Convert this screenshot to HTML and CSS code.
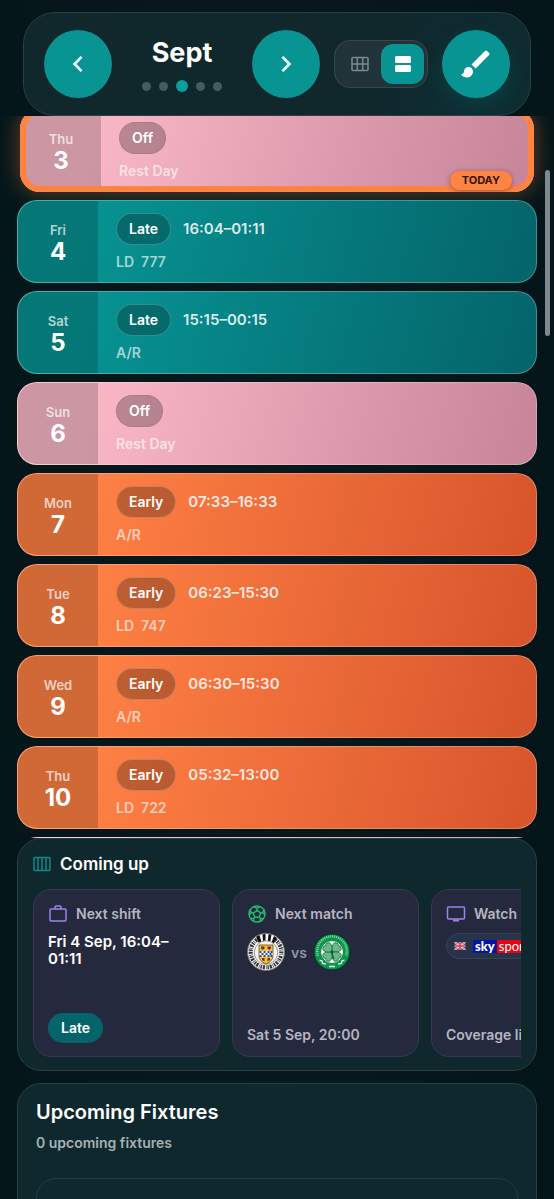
FILE: index.html
```html
<!DOCTYPE html>
<html lang="en">
<head>
    <meta charset="UTF-8">
    <meta name="viewport" content="width=device-width, initial-scale=1.0">
    <title>Shift Calendar</title>
    <link rel="stylesheet" href="styles.css">
</head>
<body>
    <header class="toolbar">
        <button class="round-btn" aria-label="Previous month">
            <svg width="32" height="32" viewBox="0 0 24 24" fill="currentColor"><path d="M15.4 7.4 14 6l-6 6 6 6 1.4-1.4L10.8 12z"/></svg>
        </button>
        <div class="month">
            <h1>Sept</h1>
            <div class="dots">
                <span class="dot"></span>
                <span class="dot"></span>
                <span class="dot active"></span>
                <span class="dot"></span>
                <span class="dot"></span>
            </div>
        </div>
        <button class="round-btn" aria-label="Next month">
            <svg width="32" height="32" viewBox="0 0 24 24" fill="currentColor"><path d="M8.6 16.6 10 18l6-6-6-6-1.4 1.4 4.6 4.6z"/></svg>
        </button>
        <div class="view-toggle">
            <button aria-label="Grid view">
                <svg width="18" height="16" viewBox="0 0 18 16" fill="none" stroke="currentColor" stroke-width="1.6"><rect x="1" y="1.5" width="16" height="13" rx="1"/><path d="M6.3 1.5v13M11.7 1.5v13M1 8h16"/></svg>
            </button>
            <button class="active" aria-label="List view">
                <svg width="18" height="18" viewBox="0 0 18 18" fill="currentColor"><rect x="1" y="1" width="16" height="7" rx="1.5"/><rect x="1" y="10" width="16" height="7" rx="1.5"/></svg>
            </button>
        </div>
        <button class="round-btn paint" aria-label="Theme">
            <svg width="36" height="36" viewBox="0 0 24 24" fill="currentColor"><path d="M7 14c-1.66 0-3 1.34-3 3 0 1.31-1.16 2-2 2 .92 1.22 2.49 2 4 2 2.21 0 4-1.79 4-4 0-1.66-1.34-3-3-3zm13.71-9.37-1.34-1.34a1 1 0 0 0-1.41 0L9 12.25 11.75 15l8.96-8.96a1 1 0 0 0 0-1.41z"/></svg>
        </button>
    </header>

    <main>
        <div class="list-wrap">
            <div class="days">
                <article class="day off today">
                    <div class="date"><span>Thu</span><strong>3</strong></div>
                    <div class="info">
                        <div class="line"><span class="pill">Off</span></div>
                        <p>Rest Day</p>
                    </div>
                    <span class="today-tag">TODAY</span>
                </article>
                <article class="day late">
                    <div class="date"><span>Fri</span><strong>4</strong></div>
                    <div class="info">
                        <div class="line"><span class="pill">Late</span><time>16:04–01:11</time></div>
                        <p>LD&nbsp; 777</p>
                    </div>
                </article>
                <article class="day late">
                    <div class="date"><span>Sat</span><strong>5</strong></div>
                    <div class="info">
                        <div class="line"><span class="pill">Late</span><time>15:15–00:15</time></div>
                        <p>A/R</p>
                    </div>
                </article>
                <article class="day off">
                    <div class="date"><span>Sun</span><strong>6</strong></div>
                    <div class="info">
                        <div class="line"><span class="pill">Off</span></div>
                        <p>Rest Day</p>
                    </div>
                </article>
                <article class="day early">
                    <div class="date"><span>Mon</span><strong>7</strong></div>
                    <div class="info">
                        <div class="line"><span class="pill">Early</span><time>07:33–16:33</time></div>
                        <p>A/R</p>
                    </div>
                </article>
                <article class="day early">
                    <div class="date"><span>Tue</span><strong>8</strong></div>
                    <div class="info">
                        <div class="line"><span class="pill">Early</span><time>06:23–15:30</time></div>
                        <p>LD&nbsp; 747</p>
                    </div>
                </article>
                <article class="day early">
                    <div class="date"><span>Wed</span><strong>9</strong></div>
                    <div class="info">
                        <div class="line"><span class="pill">Early</span><time>06:30–15:30</time></div>
                        <p>A/R</p>
                    </div>
                </article>
                <article class="day early">
                    <div class="date"><span>Thu</span><strong>10</strong></div>
                    <div class="info">
                        <div class="line"><span class="pill">Early</span><time>05:32–13:00</time></div>
                        <p>LD&nbsp; 722</p>
                    </div>
                </article>
                <article class="day off"></article>
            </div>
            <div class="scroll-thumb"></div>
        </div>

        <section class="panel coming-up">
            <h2>
                <svg width="18" height="16" viewBox="0 0 18 16" fill="none" stroke="#0b8f8c" stroke-width="1.4"><rect x="1" y="1.5" width="16" height="13" rx="1"/><path d="M5 1.5v13M9 1.5v13M13 1.5v13"/></svg>
                Coming up
            </h2>
            <div class="cards">
                <article class="card">
                    <h3>
                        <svg width="20" height="20" viewBox="0 0 20 20" fill="none" stroke="#9b82ec" stroke-width="1.5"><rect x="2" y="5" width="16" height="12" rx="1"/><path d="M7 5V3q0-1 1-1h4q1 0 1 1v2"/></svg>
                        Next shift
                    </h3>
                    <p class="shift-time">Fri 4 Sep, 16:04–01:11</p>
                    <span class="badge">Late</span>
                </article>
                <article class="card">
                    <h3>
                        <svg width="20" height="20" viewBox="0 0 20 20" fill="none" stroke="#22bd6b" stroke-width="1.4"><circle cx="10" cy="10" r="8"/><path d="m10 6.4 3.6 2.6-1.4 4.2H7.8L6.4 9z"/><path d="M10 6.4V4.5L7 2.6M10 4.5l3-1.9M13.6 9l1.9-.6 2.1-3M15.5 8.4 18 11M12.200 13.200l1.200 1.600-.4 2.600M13.400 14.800l3.200-.4M7.800 13.200l-1.200 1.600.4 2.600M6.600 14.800l-3.200-.4M6.400 9l-1.900-.6-2.100-3M4.500 8.400 2 11"/></svg>
                        Next match
                    </h3>
                    <div class="teams">
                        <svg width="38" height="38" viewBox="0 0 38 38" role="img" aria-label="St Mirren">
                            <circle cx="19" cy="19" r="18.5" fill="#eee" stroke="#777"/>
                            <circle cx="19" cy="19" r="15.3" fill="none" stroke="#333" stroke-width="4" stroke-dasharray="1.3 .9 .6 1.2 2 1"/>
                            <path d="M9 3.500Q19-1.500 29 3.500L26.500 9.500Q19 6 11.500 9.500z" fill="#fff"/>
                            <path d="m9 3.800 3.500-1.800 1.800 6.500-2.700 1.200zM15.500 1.300l3-.3v6.600l-2.500.3zM21.500 1l3 .8-1.200 6.600-2.400-.6zM27 3l2.700 1.700-3 5.800-2.100-1.400z" fill="#111"/>
                            <circle cx="19" cy="19.500" r="11.700" fill="#f5f5f5" stroke="#777" stroke-width=".7"/>
                            <path d="M12 12h14v11q0 5-7 8-7-3-7-8z" fill="#f3c430" stroke="#604b25" stroke-width=".8"/>
                            <path d="M12.500 18h13v5.500h-13z" fill="#fff"/>
                            <path d="M12.500 18h2v2h-2zm4 0h2v2h-2zm4 0h2v2h-2zm3 0h2v2h-2zm-9 2h2v2h-2zm4 0h2v2h-2zm4 0h2v2h-2zm-10 2h2v2h-2zm4 0h2v2h-2zm4 0h2v2h-2zm3 0h2v2h-2z" fill="#254d9f"/>
                            <path d="M14 13.500h3.500v2L15.800 17 14 15.500zm6.500 0H24v2L22.200 17l-1.700-1.500zM15 25h2.500v3.500L15 27zm5.500 0H23v2l-2.500 1.500z" fill="#8d2530"/>
                        </svg>
                        <span>vs</span>
                        <svg width="38" height="38" viewBox="0 0 38 38" role="img" aria-label="Celtic">
                            <circle cx="19" cy="19" r="18" fill="#08964a" stroke="#0b2f22"/>
                            <path d="M5 23A14.800 14.800 0 1 1 33 23" fill="none" stroke="#8ed3aa" stroke-width="2.200" stroke-dasharray="1.100 .9"/>
                            <path d="m6.500 27 2.500 1 .8 2.500 3 .5M31.500 27l-2.500 1-.8 2.500-3 .5M16 33.500h6" fill="none" stroke="#fff" stroke-width="1.300"/>
                            <circle cx="19" cy="19" r="11.500" fill="#f4fbf6" stroke="#07803e"/>
                            <g fill="#69b98b" stroke="#176b3e" stroke-width=".8" transform="rotate(45 19 19)">
                                <path id="leaf" d="M19 18.500q-5.500-3.500-4.700-7.500Q16.500 7.500 19 10q2.500-2.500 4.700 1 .8 4-4.700 7.500z"/>
                                <use href="#leaf" transform="rotate(90 19 19)"/>
                                <use href="#leaf" transform="rotate(180 19 19)"/>
                                <use href="#leaf" transform="rotate(270 19 19)"/>
                            </g>
                            <path d="M19 19q.5 4 2 7" fill="none" stroke="#176b3e" stroke-width="1.500"/>
                            <circle cx="19" cy="19" r="1.400" fill="#164d32"/>
                        </svg>
                    </div>
                    <p class="foot">Sat 5 Sep, 20:00</p>
                </article>
                <article class="card">
                    <h3>
                        <svg width="20" height="20" viewBox="0 0 20 20" fill="none" stroke="#9b82ec" stroke-width="1.5"><rect x="1.5" y="3" width="17" height="12" rx="1"/><path d="M7 16.5h6" stroke-width="2"/></svg>
                        Watch live
                    </h3>
                    <div class="channel">
                        <svg width="12" height="8" viewBox="0 0 12 9"><path fill="#2c3b77" d="M0 0h12v9H0z"/><path d="m0 0 12 9M12 0 0 9" stroke="#eee" stroke-width="2"/><path d="m0 0 12 9M12 0 0 9" stroke="#d4384b" stroke-width=".8"/><path d="M6 0v9M0 4.500h12" stroke="#eee" stroke-width="3"/><path d="M6 0v9M0 4.500h12" stroke="#d4384b" stroke-width="1.800"/></svg>
                        <span class="sky"><b>sky</b><i>sports</i></span>
                    </div>
                    <p class="foot">Coverage listed</p>
                </article>
            </div>
        </section>

        <section class="panel fixtures">
            <h2>Upcoming Fixtures</h2>
            <p>0 upcoming fixtures</p>
            <div class="fixture-box"></div>
        </section>
    </main>
</body>
</html>
```
FILE: styles.css
```css
* {
    box-sizing: border-box;
}
html {
    scrollbar-width: none;
    background-color: #06161a;
}
body {
    margin: 0;
    padding-top: 12px;
    font-family: Inter, sans-serif;
    font-weight: 600;
    color: #fff;
    background: linear-gradient(90deg, #04161a, #07191e 50%, #041519);
}
h1, h2, h3, p {
    margin: 0;
}
button {
    border: none;
    padding: 0;
    color: #fff;
    cursor: pointer;
    display: flex;
    align-items: center;
    justify-content: center;
}

/* Toolbar */
.toolbar {
    display: flex;
    align-items: center;
    gap: 14px;
    height: 104px;
    margin: 0 23px;
    padding: 0 20px;
    border: 1px solid #2a3f43;
    border-radius: 32px;
    background: radial-gradient(circle at 90% 75%, #0c3034, #10272c 22%);
}
.round-btn {
    flex: none;
    width: 68px;
    height: 68px;
    border-radius: 50%;
    background-color: #089493;
}
.paint {
    box-shadow: 0 8px 20px rgba(8, 148, 147, 0.14);
}
.month {
    flex: 1;
    display: flex;
    flex-direction: column;
    align-items: center;
    gap: 10px;
}
.month h1 {
    font-size: 27px;
    line-height: 34px;
    font-weight: 700;
}
.dots {
    display: flex;
    align-items: center;
    gap: 8px;
}
.dot {
    width: 9px;
    height: 9px;
    border-radius: 50%;
    background-color: #485a5e;
}
.dot.active {
    width: 12px;
    height: 12px;
    background-color: #089e99;
}
.view-toggle {
    flex: none;
    display: flex;
    padding: 3px;
    border: 1px solid #37484c;
    border-radius: 16px;
    background-color: #203338;
}
.view-toggle button {
    width: 43px;
    height: 40px;
    border-radius: 12px;
    background: none;
    color: #7c898c;
}
.view-toggle .active {
    background-color: #089493;
    color: #fff;
}

/* Day list */
.list-wrap {
    position: relative;
}
.days {
    display: flex;
    flex-direction: column;
    gap: 8px;
    max-height: 722px;
    padding: 0 17px;
    overflow: hidden;
}
.day {
    position: relative;
    flex: none;
    display: flex;
    height: 83px;
    border: 1px solid rgba(255, 255, 255, 0.25);
    border-radius: 20px;
    background-origin: border-box;
}
.day.late {
    background-image: linear-gradient(105deg, #079292 15%, #04646a);
}
.day.off {
    background-image: linear-gradient(105deg, #f9b7c6 15%, #c58498);
}
.day.early {
    background-image: linear-gradient(105deg, #ff8044 15%, #d7542c);
}
.date {
    flex: none;
    display: flex;
    flex-direction: column;
    align-items: center;
    justify-content: center;
    width: 80px;
    padding-top: 4px;
    border-radius: 19px 0 0 19px;
    background-color: rgba(0, 0, 0, 0.18);
}
.date span {
    font-size: 13px;
    line-height: 16px;
    color: rgba(255, 255, 255, 0.7);
}
.date strong {
    font-size: 24px;
    line-height: 28px;
    font-weight: 700;
}
.info {
    flex: 1;
    padding: 12px 18px;
}
.line {
    display: flex;
    align-items: center;
    gap: 12px;
}
.pill {
    padding: 5px 12px;
    border: 1px solid rgba(255, 255, 255, 0.22);
    border-radius: 16px;
    font-size: 14px;
    line-height: 20px;
    background-color: rgba(0, 0, 0, 0.25);
}
.late .pill {
    background-color: #056a6b;
}
.off .pill {
    border-color: rgba(150, 100, 120, 0.3);
}
.line time {
    font-size: 15px;
    line-height: 20px;
    color: rgba(255, 255, 255, 0.85);
}
.info p {
    margin-top: 8px;
    font-size: 14px;
    line-height: 18px;
    color: rgba(255, 255, 255, 0.65);
}
.today {
    margin: -7px 3px 0;
    box-shadow: 0 0 22px rgba(255, 130, 66, 0.4);
}
.today::after {
    content: "";
    position: absolute;
    inset: -1px;
    border: 6px solid #ff8442;
    border-radius: 20px;
}
.today-tag {
    position: absolute;
    right: 21px;
    bottom: 1px;
    z-index: 1;
    padding: 0 12px;
    border-radius: 10px;
    font-size: 11px;
    line-height: 19px;
    font-weight: 700;
    color: #321408;
    background-color: #ff8442;
    box-shadow: 0 1px 5px rgba(90, 30, 30, 0.5);
}
.scroll-thumb {
    position: absolute;
    top: 54px;
    right: 4px;
    width: 5px;
    height: 166px;
    border-radius: 3px;
    background-color: #7e898b;
}

/* Panels */
.panel {
    margin: 0 17px;
    border: 1px solid #29403f;
    border-radius: 24px;
    background-color: #0f282d;
}
.coming-up {
    padding: 13px 15px;
}
.coming-up h2 {
    display: flex;
    align-items: center;
    gap: 9px;
    font-size: 17px;
    line-height: 24px;
    font-weight: 600;
}
.cards {
    display: flex;
    gap: 12px;
    margin-top: 13px;
    overflow: hidden;
}
.card {
    flex: none;
    display: flex;
    flex-direction: column;
    align-items: flex-start;
    width: 187px;
    height: 168px;
    padding: 13px 14px;
    border: 1px solid #36394e;
    border-radius: 18px;
    background-color: #25293e;
}
.card h3 {
    display: flex;
    align-items: center;
    gap: 8px;
    font-size: 14px;
    line-height: 22px;
    font-weight: 600;
    color: #b5b6c1;
    white-space: nowrap;
}
.shift-time {
    margin-top: 8px;
    padding-right: 14px;
    font-size: 15px;
    line-height: 17px;
}
.badge {
    margin-top: auto;
    padding: 0 13px;
    border-radius: 15px;
    font-size: 14px;
    line-height: 30px;
    background-color: #05646a;
}
.teams {
    display: flex;
    align-items: center;
    gap: 6px;
    margin-top: 8px;
    font-size: 14px;
    color: #9395a3;
}
.foot {
    margin-top: auto;
    font-size: 14px;
    line-height: 16px;
    color: #b5b6c1;
    white-space: nowrap;
}
.channel {
    display: flex;
    align-items: center;
    gap: 7px;
    height: 26px;
    margin-top: 8px;
    padding: 0 7px;
    border: 1px solid #354257;
    border-radius: 13px;
    background-color: #28334a;
}
.sky {
    display: flex;
    font-family: Lato, sans-serif;
    font-size: 13px;
    line-height: 13px;
}
.sky b {
    padding: 0 2px;
    font-weight: 900;
    background-color: #0714a8;
}
.sky i {
    padding: 0 2px;
    font-style: normal;
    font-weight: 400;
    background-color: #e3070d;
}
.fixtures {
    margin-top: 12px;
    padding: 16px 18px;
}
.fixtures h2 {
    font-size: 20px;
    line-height: 24px;
    font-weight: 600;
}
.fixtures p {
    margin-top: 9px;
    font-size: 14px;
    line-height: 20px;
    color: #a6b1b4;
}
.fixture-box {
    min-height: 120px;
    margin-top: 25px;
    border: 1px solid #253b3f;
    border-radius: 20px;
}
```
